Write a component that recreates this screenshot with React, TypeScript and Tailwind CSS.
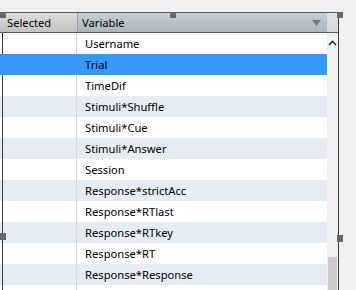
import React from "react";

const rows = [
  "Username",
  "Trial",
  "TimeDif",
  "Stimuli*Shuffle",
  "Stimuli*Cue",
  "Stimuli*Answer",
  "Session",
  "Response*strictAcc",
  "Response*RTlast",
  "Response*RTkey",
  "Response*RT",
  "Response*Response",
  "",
];

export default function App() {
  return (
    <div
      className="relative w-[356px] h-[290px] overflow-hidden bg-[#f0f0f0] pt-[12px] text-[11.2px] text-black"
      style={{ fontFamily: '"Noto Sans", "Open Sans", sans-serif' }}
    >
      <div className="flex w-[339px] h-[278px] border-r border-[#3a3a3a]">
        <div className="flex flex-col w-[327px] h-full">
          {/* header */}
          <div className="flex h-[21px] border-t border-b border-[#5a5a5a] shrink-0">
            <div className="w-[77px] bg-gradient-to-b from-[#dcdcdc] to-[#c2c2c2] pl-[7px] flex items-center leading-none">
              Selected
            </div>
            <div className="w-px bg-[#9a9a9a]" />
            <div className="flex-1 bg-gradient-to-b from-[#c6d0d5] to-[#a9b7be] pl-[4px] pr-[6px] flex items-center justify-between leading-none">
              <span>Variable</span>
              <svg width="9" height="6" viewBox="0 0 9 6">
                <path d="M0 0 H9 L4.5 6 Z" fill="#6d7a80" />
              </svg>
            </div>
          </div>
          {/* rows */}
          <div className="flex flex-col">
            {rows.map((r, i) => {
              const selected = i === 1;
              const alt = i % 2 === 1;
              const bg = selected
                ? "bg-[#3399ff]"
                : alt
                ? "bg-[#e6ecf6]"
                : "bg-white";
              return (
                <div key={i} className={`flex h-[21px] shrink-0 ${bg}`}>
                  <div
                    className={`w-[77px] border-r ${
                      selected ? "border-[#3399ff]" : "border-[#d6d6d6]"
                    }`}
                  >
                    {!selected && <div className="ml-[2px] w-px h-full bg-[#3a3a3a]" />}
                  </div>
                  <div className="flex-1 pl-[8px] flex items-center leading-none whitespace-nowrap">
                    {r}
                  </div>
                </div>
              );
            })}
          </div>
        </div>
        {/* scrollbar */}
        <div className="flex flex-col w-[11px] h-full">
          <div className="h-[21px] shrink-0 border-t border-b border-[#5a5a5a] bg-gradient-to-b from-[#e2e4e5] to-[#d4d8da]" />
          <div className="flex-1 bg-[#eef0f2] flex flex-col items-center">
            <svg width="9" height="6" viewBox="0 0 9 6" className="mt-[7px]">
              <path d="M1 5 L4.5 1.5 L8 5" fill="none" stroke="#333" strokeWidth="1.6" />
            </svg>
            <div className="flex-1" />
            <div className="w-[9px] h-[33px] bg-[#cdcdcd]" />
          </div>
        </div>
      </div>
      {/* handles */}
      <div className="absolute left-0 top-[12px] w-[6px] h-[6px] bg-[#6a6a6a]" />
      <div className="absolute left-[170px] top-[12px] w-[6px] h-[6px] bg-[#6a6a6a]" />
      <div className="absolute left-[337px] top-[12px] w-[6px] h-[6px] bg-[#6a6a6a]" />
      <div className="absolute left-0 top-[233px] w-[6px] h-[7px] bg-[#6a6a6a]" />
      <div className="absolute left-[337px] top-[235px] w-[6px] h-[7px] bg-[#6a6a6a]" />
    </div>
  );
}
